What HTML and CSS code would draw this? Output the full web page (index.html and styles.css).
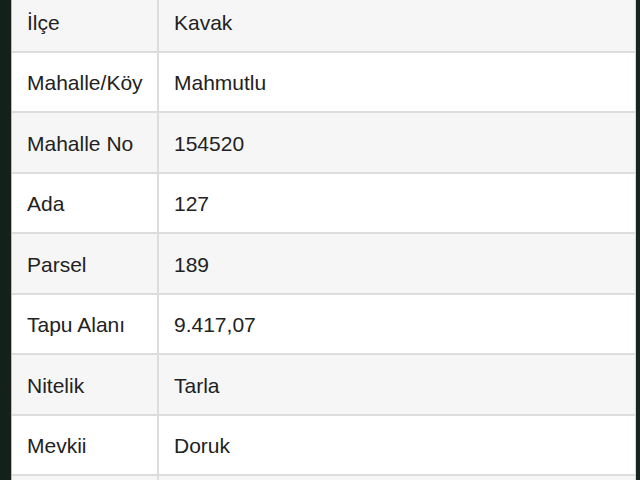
FILE: index.html
```html
<!DOCTYPE html>
<html lang="tr">
<head>
<meta charset="utf-8">
<link rel="stylesheet" href="styles.css">
</head>
<body>
<div class="frame">
  <div class="sheet">
    <div class="row alt"><div class="key">İlçe</div><div class="val">Kavak</div></div>
    <div class="row"><div class="key">Mahalle/Köy</div><div class="val">Mahmutlu</div></div>
    <div class="row alt"><div class="key">Mahalle No</div><div class="val">154520</div></div>
    <div class="row"><div class="key">Ada</div><div class="val">127</div></div>
    <div class="row alt"><div class="key">Parsel</div><div class="val">189</div></div>
    <div class="row"><div class="key">Tapu Alanı</div><div class="val">9.417,07</div></div>
    <div class="row alt"><div class="key">Nitelik</div><div class="val">Tarla</div></div>
    <div class="row"><div class="key">Mevkii</div><div class="val">Doruk</div></div>
    <div class="row alt"><div class="key">&nbsp;</div><div class="val">&nbsp;</div></div>
  </div>
</div>
</body>
</html>
```
FILE: styles.css
```css
html, body {
  margin: 0;
  padding: 0;
  height: 100%;
  overflow: hidden;
}
body {
  background: linear-gradient(90deg, #14201a 0%, #22322a 40%, #18241e 100%);
  font-family: "Liberation Sans", Arial, sans-serif;
  color: #222;
}
.frame {
  display: flex;
  padding-left: 11px;
  padding-right: 4px;
  height: 100%;
}
.sheet {
  flex: 1;
  margin-top: -8px;
  background: #fff;
  border-left: 1px solid #b8bcb9;
  border-right: 1px solid #d6d6d6;
}
.row {
  display: grid;
  grid-template-columns: 147px 1fr;
  height: 60.5px;
  box-sizing: border-box;
  border-bottom: 2px solid #dddddd;
  background: #fff;
}
.row.alt {
  background: #f6f6f6;
}
.key, .val {
  display: flex;
  align-items: center;
  font-size: 21px;
  padding-top: 3px;
}
.key {
  padding-left: 15px;
  border-right: 2px solid #dddddd;
}
.val {
  padding-left: 15px;
}
```
